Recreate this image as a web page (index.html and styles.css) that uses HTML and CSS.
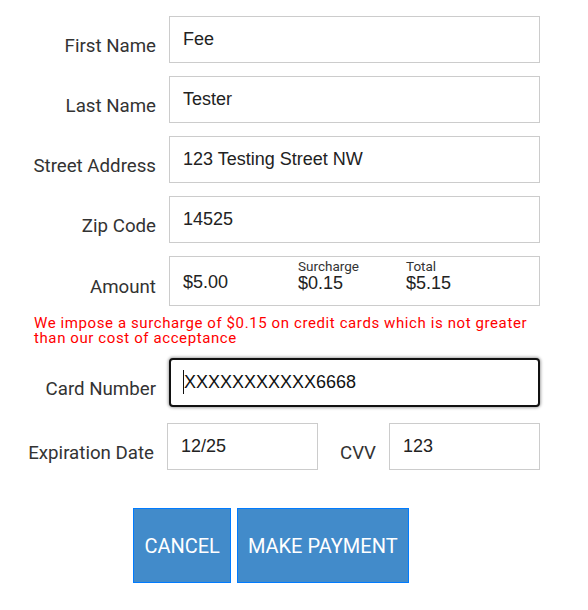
FILE: index.html
```html
<!doctype html>
<html>
<head>
    <meta charset="utf-8">
    <title>Payment</title>
    <meta name="viewport" content="width=device-width, initial-scale=1">
    <link rel="stylesheet" href="styles.css">
</head>

<body class="pay-body">
<form class="pay-form" action="#" method="post">
    <div class="pay-grid">
        <label class="pay-label" for="first-name">First Name</label>
        <input id="first-name" class="pay-input" type="text" value="Fee"/>

        <label class="pay-label" for="last-name">Last Name</label>
        <input id="last-name" class="pay-input" type="text" value="Tester"/>

        <label class="pay-label" for="street">Street Address</label>
        <input id="street" class="pay-input" type="text" value="123 Testing Street NW"/>

        <label class="pay-label" for="zip">Zip Code</label>
        <input id="zip" class="pay-input" type="text" value="14525"/>

        <span class="pay-label">Amount</span>
        <div class="pay-amount">
            <div class="pay-amount-col">
                <span class="pay-amount-value">$5.00</span>
            </div>
            <div class="pay-amount-col pay-amount-col-captioned">
                <span class="pay-amount-caption">Surcharge</span>
                <span class="pay-amount-value">$0.15</span>
            </div>
            <div class="pay-amount-col pay-amount-col-captioned">
                <span class="pay-amount-caption">Total</span>
                <span class="pay-amount-value">$5.15</span>
            </div>
        </div>

        <p class="pay-notice">We impose a surcharge of $0.15 on credit cards which is not greater than our cost of acceptance</p>

        <label class="pay-label" for="card">Card Number</label>
        <div class="pay-card">
            <input id="card" class="pay-input pay-input-active" type="text" value="XXXXXXXXXXX6668"/>
        </div>
    </div>

    <div class="pay-row">
        <label class="pay-label pay-label-exp" for="exp">Expiration Date</label>
        <input id="exp" class="pay-input pay-input-exp" type="text" value="12/25"/>
        <label class="pay-label pay-label-cvv" for="cvv">CVV</label>
        <input id="cvv" class="pay-input pay-input-cvv" type="text" value="123"/>
    </div>

    <div class="pay-actions">
        <button type="button" class="pay-button">Cancel</button>
        <button type="submit" class="pay-button">Make Payment</button>
    </div>
</form>
</body>
</html>
```

FILE: styles.css
```css
.pay-body {
    margin: 8px;
    background: #FFFFFF;
    font-family: "Roboto", "Liberation Sans", sans-serif;
    color: #333;
}

.pay-form {
    width: 532px;
    padding-top: 8px;
}

.pay-grid {
    display: grid;
    grid-template-columns: 148px 1fr;
    column-gap: 13px;
    row-gap: 13px;
}

.pay-label {
    align-self: center;
    padding-top: 12px;
    text-align: right;
    font-size: 18.7px;
    color: #333;
}

.pay-input {
    box-sizing: border-box;
    height: 47px;
    width: 100%;
    margin: 0;
    padding: 0 13px;
    border: 1px solid #ccc;
    border-radius: 0;
    outline: 0;
    background: #FFFFFF;
    font-family: "Liberation Sans", Arial, sans-serif;
    font-size: 18px;
    color: #222;
}

.pay-amount {
    box-sizing: border-box;
    height: 50px;
    display: grid;
    grid-template-columns: 115px 108px 1fr;
    align-items: center;
    padding: 0 13px;
    border: 1px solid #ccc;
}

.pay-amount-col {
    display: flex;
    flex-direction: column;
    padding-top: 2px;
}

.pay-amount-col-captioned {
    margin-top: -13px;
}

.pay-amount-caption {
    font-family: "Roboto", sans-serif;
    font-size: 13.5px;
    line-height: 14px;
    color: #333;
}

.pay-amount-value {
    font-family: "Liberation Sans", Arial, sans-serif;
    font-size: 18px;
    line-height: 20px;
    color: #222;
}

.pay-notice {
    grid-column: 1 / -1;
    margin: -3px 0 -1px 26px;
    font-size: 15px;
    line-height: 15px;
    letter-spacing: 0.6px;
    color: #ff0000;
}

.pay-card {
    position: relative;
}

.pay-card .pay-input-active {
    height: 49px;
    border: 2px solid #111;
    border-radius: 4px;
    box-shadow: 0 0 3px 1px rgba(0, 0, 0, 0.35);
    color: #111;
}

/* text caret of the focused field */
.pay-card::before {
    content: "";
    position: absolute;
    left: 14px;
    top: 12px;
    width: 1px;
    height: 24px;
    background: #111;
}

.pay-row {
    display: flex;
    align-items: center;
    margin-top: 16px;
}

.pay-label-exp {
    width: 146px;
    flex: none;
    margin-right: 13px;
}

.pay-input-exp {
    width: 151px;
    flex: none;
}

.pay-label-cvv {
    margin: 0 13px 0 22px;
}

.pay-input-cvv {
    flex: 1;
}

.pay-actions {
    display: flex;
    justify-content: center;
    gap: 6px;
    margin-top: 38px;
    padding-right: 6px;
}

.pay-button {
    height: 75px;
    padding: 0 10px;
    border: 1px solid #007bff;
    border-radius: 0;
    background: #428bca;
    color: #FFFFFF;
    font-family: "Roboto", sans-serif;
    font-size: 20px;
    text-transform: uppercase;
    cursor: pointer;
}
```
